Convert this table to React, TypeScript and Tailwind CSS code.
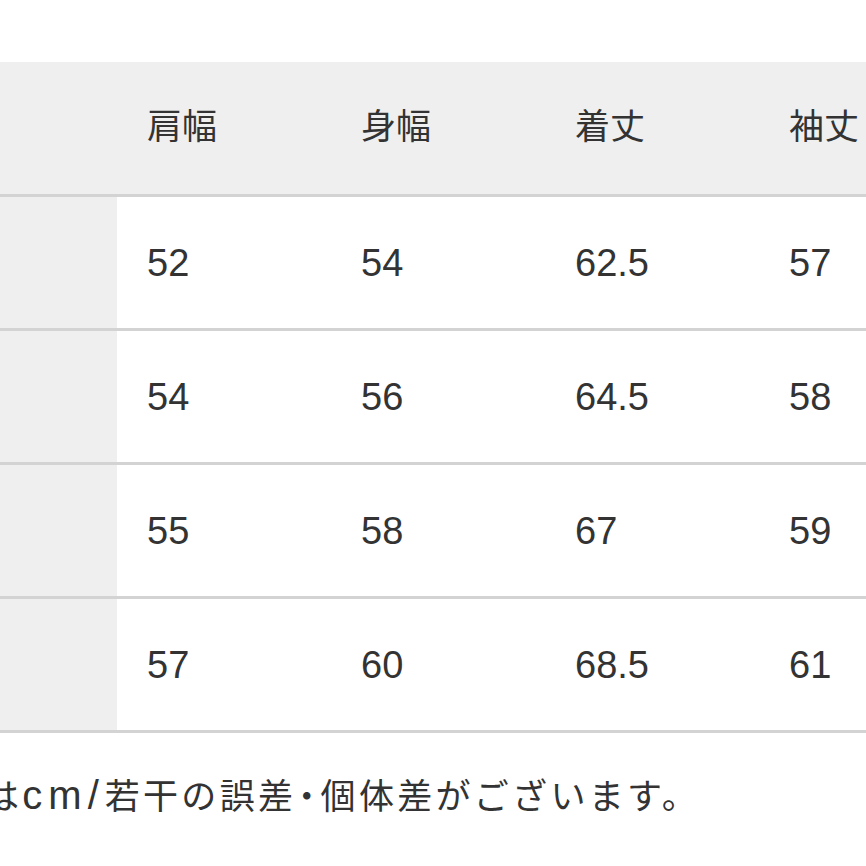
const headers = ['肩幅', '身幅', '着丈', '袖丈']

const rows = [
  ['52', '54', '62.5', '57'],
  ['54', '56', '64.5', '58'],
  ['55', '58', '67', '59'],
  ['57', '60', '68.5', '61'],
]

export default function App() {
  return (
    <div className="w-[866px] h-[866px] overflow-hidden bg-white text-[#333333]">
      <div className="pt-[62px]">
        {/* header */}
        <div className="flex h-[135px] w-[973px] bg-[#efefef] border-b-[3px] border-[#d3d3d3]">
          <div className="w-[117px] shrink-0" />
          {headers.map((h) => (
            <div
              key={h}
              className="w-[214px] shrink-0 pl-[30px] flex items-center pb-[9px] text-[35px] leading-none font-['Noto_Sans_CJK_JP',sans-serif]"
            >
              {h}
            </div>
          ))}
        </div>

        {/* body */}
        {rows.map((r, i) => (
          <div key={i} className="flex h-[134px] w-[973px] border-b-[3px] border-[#d3d3d3]">
            <div className="w-[117px] shrink-0 bg-[#efefef]" />
            {r.map((v, j) => (
              <div
                key={j}
                className="w-[214px] shrink-0 pl-[30px] flex items-center text-[38px] leading-none font-['Liberation_Sans',Arial,sans-serif]"
              >
                {v}
              </div>
            ))}
          </div>
        ))}

        {/* note */}
        <div className="mt-[42px] -ml-[16px] whitespace-nowrap text-[35px] leading-none tracking-[3.3px] font-['Liberation_Sans','Noto_Sans_CJK_JP',sans-serif]">
          は<span className="text-[40px] tracking-[6px]">cm/</span>若干の誤差<span className="-mx-[7px]">・</span>個体差がございます。
        </div>
      </div>
    </div>
  )
}
